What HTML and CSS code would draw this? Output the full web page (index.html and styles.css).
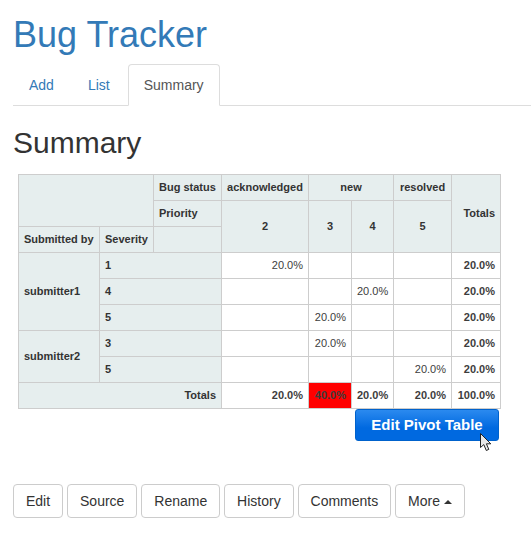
FILE: index.html
```html
<!DOCTYPE html>
<html lang="en">
<head>
	<meta charset="UTF-8">
	<title>Bug Tracker</title>
	<link rel="stylesheet" href="styles.css">
</head>
<body>

<h1 class="site-title"><a href="#">Bug Tracker</a></h1>

<ul class="tabs">
	<li><a href="#">Add</a></li>
	<li><a href="#">List</a></li>
	<li class="active"><a href="#">Summary</a></li>
</ul>

<h2 class="page-title">Summary</h2>

<div class="pivot-area">
	<table class="pivot">
		<colgroup>
			<col class="col-submitter">
			<col class="col-severity">
			<col class="col-label">
			<col class="col-ack">
			<col class="col-new3">
			<col class="col-new4">
			<col class="col-resolved">
			<col class="col-totals">
		</colgroup>
		<thead>
			<tr>
				<th colspan="2" rowspan="2"></th>
				<th>Bug status</th>
				<th class="center">acknowledged</th>
				<th class="center" colspan="2">new</th>
				<th class="center">resolved</th>
				<th class="right" rowspan="3">Totals</th>
			</tr>
			<tr>
				<th>Priority</th>
				<th class="center" rowspan="2">2</th>
				<th class="center" rowspan="2">3</th>
				<th class="center" rowspan="2">4</th>
				<th class="center" rowspan="2">5</th>
			</tr>
			<tr>
				<th>Submitted by</th>
				<th>Severity</th>
				<th></th>
			</tr>
		</thead>
		<tbody>
			<tr>
				<th rowspan="3">submitter1</th>
				<th colspan="2">1</th>
				<td>20.0%</td><td></td><td></td><td></td>
				<td class="total">20.0%</td>
			</tr>
			<tr>
				<th colspan="2">4</th>
				<td></td><td></td><td>20.0%</td><td></td>
				<td class="total">20.0%</td>
			</tr>
			<tr>
				<th colspan="2">5</th>
				<td></td><td>20.0%</td><td></td><td></td>
				<td class="total">20.0%</td>
			</tr>
			<tr>
				<th rowspan="2">submitter2</th>
				<th colspan="2">3</th>
				<td></td><td>20.0%</td><td></td><td></td>
				<td class="total">20.0%</td>
			</tr>
			<tr>
				<th colspan="2">5</th>
				<td></td><td></td><td></td><td>20.0%</td>
				<td class="total">20.0%</td>
			</tr>
			<tr>
				<th class="right" colspan="3">Totals</th>
				<td class="total">20.0%</td>
				<td class="total hot">40.0%</td>
				<td class="total">20.0%</td>
				<td class="total">20.0%</td>
				<td class="total">100.0%</td>
			</tr>
		</tbody>
	</table>

	<div class="edit-row">
		<button class="edit-pivot">Edit Pivot Table</button>
		<!-- mouse pointer sitting on the button -->
		<svg class="pointer" width="13" height="20" viewBox="0 0 13 20">
			<path d="M1.5 1.5 V15.5 L4.8 12.6 L7.3 18.5 L9.8 17.4 L7.4 11.8 H11.8 Z" fill="#e8e8e8" stroke="#222" stroke-width="1"/>
		</svg>
	</div>
</div>

<div class="actions">
	<a class="btn" href="#">Edit</a>
	<a class="btn" href="#">Source</a>
	<a class="btn" href="#">Rename</a>
	<a class="btn" href="#">History</a>
	<a class="btn" href="#">Comments</a>
	<a class="btn" href="#">More <span class="caret"></span></a>
</div>

</body>
</html>
```

FILE: styles.css
```css
* {
	box-sizing: border-box;
}

body {
	margin: 0;
	padding: 0 0 0 13px;
	font-family: "Liberation Sans", Arial, sans-serif;
	font-size: 14px;
	line-height: 20px;
	color: #333;
	background-color: #fff;
}

a {
	color: #337ab7;
	text-decoration: none;
}

.site-title {
	margin: 0;
	padding-top: 15px;
	font-size: 36px;
	font-weight: 500;
	line-height: 40px;
}

.tabs {
	display: flex;
	gap: 2px;
	list-style: none;
	margin: 9px 0 0;
	padding: 0;
	border-bottom: 1px solid #ddd;
}

.tabs a {
	display: block;
	padding: 10px 15px;
	margin-bottom: -1px;
	border: 1px solid transparent;
	border-radius: 4px 4px 0 0;
}

.tabs .active a {
	color: #555;
	background-color: #fff;
	border-color: #ddd #ddd #fff;
}

.page-title {
	margin: 20px 0 15px;
	font-size: 30px;
	font-weight: 500;
	line-height: 33px;
}

.pivot-area {
	display: inline-block;
	margin-left: 5px;
}

.pivot {
	table-layout: fixed;
	width: 482px;
	border-collapse: collapse;
	font-size: 11px;
	line-height: 15px;
	text-align: left;
}

.col-submitter { width: 81px; }
.col-severity { width: 54px; }
.col-label { width: 68px; }
.col-ack { width: 87px; }
.col-new3 { width: 43px; }
.col-new4 { width: 42px; }
.col-resolved { width: 58px; }
.col-totals { width: 49px; }

.pivot th {
	height: 26px;
	padding: 5px;
	background-color: #e6eeee;
	border: 1px solid #cdcdcd;
	color: #333;
	font-weight: bold;
}

.pivot td {
	height: 26px;
	padding: 5px;
	background-color: #fff;
	border: 1px solid #cdcdcd;
	color: #3d3d3d;
	text-align: right;
}

.pivot .center {
	text-align: center;
}

.pivot .right {
	text-align: right;
}

.pivot .total {
	font-weight: bold;
}

.pivot .hot {
	background-color: #f00;
}

.edit-row {
	position: relative;
	display: flex;
	justify-content: flex-end;
	padding-right: 2px;
}

.edit-pivot {
	width: 144px;
	height: 32px;
	padding: 0 0 2px;
	border: 1px solid #0062cc;
	border-radius: 3px;
	background: linear-gradient(#2b8aef, #0069e0 60%);
	color: #fff;
	font-family: inherit;
	font-size: 15px;
	font-weight: bold;
}

.pointer {
	position: absolute;
	right: 9px;
	top: 23px;
}

.actions {
	margin-top: 43px;
}

.btn {
	display: inline-block;
	padding: 6px 12px;
	border: 1px solid #ccc;
	border-radius: 4px;
	background-color: #fff;
	color: #333;
}

.caret {
	display: inline-block;
	width: 0;
	height: 0;
	vertical-align: middle;
	border-right: 4px solid transparent;
	border-left: 4px solid transparent;
	border-bottom: 4px solid #333;
}
```
